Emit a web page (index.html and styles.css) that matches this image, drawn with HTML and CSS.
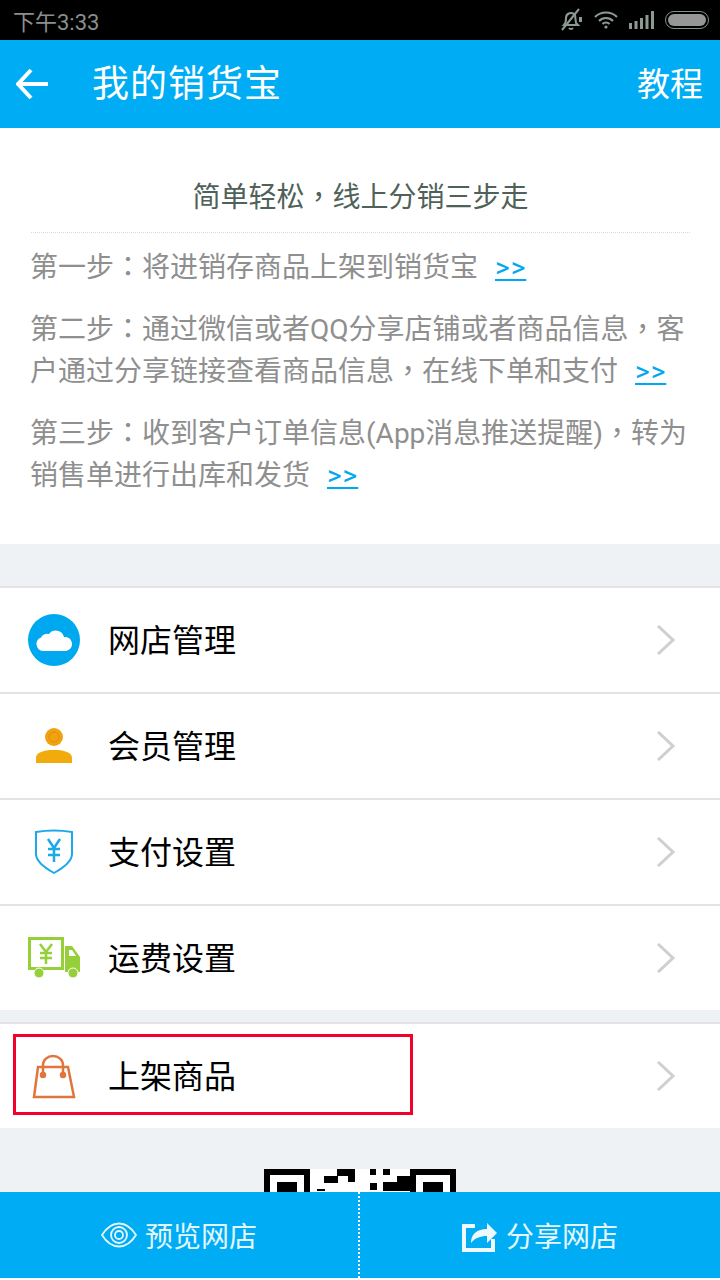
FILE: index.html
```html
<!DOCTYPE html>
<html lang="zh-CN">
<head>
  <meta charset="UTF-8" />
  <meta name="viewport" content="width=device-width, initial-scale=1.0"/>
  <title>我的销货宝</title>
  <link rel="stylesheet" href="styles.css">
</head>
<body>

<div class="app">
  <!-- status bar -->
  <div class="status-bar">
    <span class="status-time">下午3:33</span>
    <div class="status-icons">
      <svg class="icon-bell" width="24" height="24" viewBox="0 0 24 24" fill="none" stroke="#8d9a92" stroke-width="2">
        <path d="M5 17c2-2 2-4 2-7a5 5 0 0 1 9-3l1 8 2 2z"/>
        <path d="M10 20a2.5 2.5 0 0 0 4 0"/>
        <path d="M20 1L3 22"/>
        <path d="M20 9h3v5h-3z" fill="#8d9a92" stroke="none"/>
      </svg>
      <svg class="icon-wifi" width="24" height="18" viewBox="0 0 24 18" fill="none" stroke="#8d9a92" stroke-width="2.2">
        <path d="M1 6c6-6 16-6 22 0"/>
        <path d="M5 10c4-4 10-4 14 0"/>
        <path d="M8.5 13c2-2 5-2 7 0"/>
        <circle cx="12" cy="16" r="1.6" fill="#8d9a92" stroke="none"/>
      </svg>
      <svg class="icon-signal" width="25" height="18" viewBox="0 0 25 18" fill="#8d9a92">
        <rect x="0" y="12" width="3" height="6"/>
        <rect x="5.5" y="10" width="3" height="8"/>
        <rect x="11" y="7" width="3" height="11"/>
        <rect x="16.5" y="4" width="3" height="14"/>
        <rect x="22" y="0" width="3" height="18"/>
      </svg>
      <div class="battery"><div class="battery-fill"></div></div>
    </div>
  </div>

  <!-- title bar -->
  <div class="title-bar">
    <svg class="back-arrow" width="32" height="32" viewBox="0 0 32 32" fill="none" stroke="#fff" stroke-width="4">
      <path d="M15 2L2 16l13 14"/>
      <path d="M2 16h30"/>
    </svg>
    <h1 class="page-title">我的销货宝</h1>
    <span class="title-action">教程</span>
  </div>

  <div class="content">
    <section class="intro">
      <h2 class="intro-title">简单轻松<span class="cn-mark" lang="zh-TW">，</span>线上分销三步走</h2>
      <p class="step">第一步<span class="cn-mark" lang="zh-TW">：</span>将进销存商品上架到销货宝 <a class="more">&gt;&gt;</a></p>
      <p class="step">第二步<span class="cn-mark" lang="zh-TW">：</span>通过微信或者QQ分享店铺或者商品信息<span class="cn-mark" lang="zh-TW">，</span>客户通过分享链接查看商品信息<span class="cn-mark" lang="zh-TW">，</span>在线下单和支付 <a class="more">&gt;&gt;</a></p>
      <p class="step">第三步<span class="cn-mark" lang="zh-TW">：</span>收到客户订单信息(App消息推送提醒)<span class="cn-mark" lang="zh-TW">，</span>转为销售单进行出库和发货 <a class="more">&gt;&gt;</a></p>
    </section>

    <div class="menu-group">
      <div class="menu-row">
        <svg class="menu-icon" width="52" height="52" viewBox="0 0 52 52">
          <circle cx="26" cy="26" r="26" fill="#00a8ef"/>
          <path d="M15 37a7 7 0 0 1-2-13.500a7.500 7.500 0 0 1 8-3.500a8.500 8.500 0 0 1 15 3a7 7 0 0 1 2 14z" fill="#fff"/>
        </svg>
        <span class="menu-label">网店管理</span>
        <svg class="chevron" width="20" height="30" viewBox="0 0 20 30" fill="none" stroke="#cfcfcf" stroke-width="3"><path d="M2 1l15 14L2 29"/></svg>
      </div>
      <div class="menu-row">
        <svg class="menu-icon" width="52" height="52" viewBox="0 0 52 52">
          <circle cx="26" cy="17" r="9" fill="#f0a30f"/>
          <circle cx="26" cy="17" r="5" fill="none" stroke="#e08e0a" stroke-width="1"/>
          <path d="M8 43v-5c0-5 6-7 13-8h10c7 1 13 3 13 8v5z" fill="#f2ab0c"/>
        </svg>
        <span class="menu-label">会员管理</span>
        <svg class="chevron" width="20" height="30" viewBox="0 0 20 30" fill="none" stroke="#cfcfcf" stroke-width="3"><path d="M2 1l15 14L2 29"/></svg>
      </div>
      <div class="menu-row">
        <svg class="menu-icon" width="52" height="52" viewBox="0 0 52 52" fill="none" stroke="#1ba9ea" stroke-width="2">
          <path d="M8 6c12-2 24-2 36 0v22c0 8-9 14-18 19-9-5-18-11-18-19z"/>
          <path d="M20 13l6 9 6-9M26 22v14M20 23h12M20 29h12" stroke-width="2.500"/>
        </svg>
        <span class="menu-label">支付设置</span>
        <svg class="chevron" width="20" height="30" viewBox="0 0 20 30" fill="none" stroke="#cfcfcf" stroke-width="3"><path d="M2 1l15 14L2 29"/></svg>
      </div>
      <div class="menu-row">
        <svg class="menu-icon" width="52" height="52" viewBox="0 0 52 52">
          <path d="M1.500 6.500h33v30H1.500z" fill="none" stroke="#95cf3a" stroke-width="3"/>
          <path d="M12 12l6 8 6-8M18 20v12M12 21h12M12 26h12" fill="none" stroke="#95cf3a" stroke-width="2.500"/>
          <path d="M37 14h7l8 11v15H37z" fill="#95cf3a"/>
          <path d="M41 18h3l4 6h-7z" fill="#fff"/>
          <circle cx="11" cy="41" r="5" fill="#95cf3a" stroke="#fff" stroke-width="1"/>
          <circle cx="45" cy="41" r="5" fill="#95cf3a" stroke="#fff" stroke-width="1"/>
        </svg>
        <span class="menu-label">运费设置</span>
        <svg class="chevron" width="20" height="30" viewBox="0 0 20 30" fill="none" stroke="#cfcfcf" stroke-width="3"><path d="M2 1l15 14L2 29"/></svg>
      </div>
    </div>

    <div class="menu-group">
      <div class="menu-row">
        <svg class="menu-icon" width="52" height="52" viewBox="0 0 52 52" fill="none" stroke="#e0763c" stroke-width="2.500">
          <path d="M10 17h30l6 30H6z"/>
          <path d="M15 25V15a10 9 0 0 1 20 0v10"/>
          <circle cx="15" cy="25" r="2" fill="#e0763c"/>
          <circle cx="35" cy="25" r="2" fill="#e0763c"/>
        </svg>
        <span class="menu-label">上架商品</span>
        <svg class="chevron" width="20" height="30" viewBox="0 0 20 30" fill="none" stroke="#cfcfcf" stroke-width="3"><path d="M2 1l15 14L2 29"/></svg>
        <div class="highlight-box"></div>
      </div>
    </div>

    <!-- shop QR code, runs on under the bottom bar -->
    <div class="qr-wrap">
      <svg class="qr" width="192" height="192" viewBox="0 0 192 192">
        <rect width="192" height="192" fill="#fff"/>
        <path d="M0 0h46v46H0zM6 6v34h34V6z" fill="#000" fill-rule="evenodd"/>
        <path d="M146 0h46v46h-46zM152 6v34h34V6z" fill="#000" fill-rule="evenodd"/>
        <rect x="13" y="13" width="20" height="20"/>
        <rect x="159" y="13" width="20" height="20"/>
        <rect x="73" y="0" width="18" height="7"/>
        <rect x="60" y="7" width="14" height="7"/>
        <rect x="84" y="7" width="7" height="6"/>
        <rect x="106" y="0" width="6" height="6"/>
        <rect x="119" y="0" width="7" height="6"/>
        <rect x="133" y="7" width="13" height="15"/>
        <rect x="119" y="13" width="14" height="9"/>
        <rect x="106" y="14" width="7" height="7"/>
        <rect x="53" y="20" width="8" height="2"/>
      </svg>
    </div>
  </div>

  <!-- bottom actions -->
  <div class="tab-bar">
    <div class="tab tab-preview">
      <svg width="36" height="26" viewBox="0 0 36 26" fill="none" stroke="#e6f6fd" stroke-width="1.800">
        <path d="M1 13C6 5 12 1.500 18 1.500S30 5 35 13c-5 8-11 11.500-17 11.500S6 21 1 13z"/>
        <circle cx="18" cy="13" r="8"/>
        <circle cx="18" cy="13" r="4"/>
      </svg>
      <span>预览网店</span>
    </div>
    <div class="tab">
      <svg width="36" height="40" viewBox="0 0 36 40" fill="none" stroke="#eef9fe" stroke-width="4">
        <path d="M13 11H2v24h29V24"/>
        <path d="M9 28c0-9 6-14 16-14V8l10 10-10 10v-7c-7 0-12 2-16 7z" fill="#eef9fe" stroke="none"/>
      </svg>
      <span>分享网店</span>
    </div>
  </div>
</div>

</body>
</html>
```

FILE: styles.css
```css
:root {
  --blue: #00adf5;
  --page-bg: #eef2f5;
  --line: #e3e3e5;
}
html, body {
  margin: 0;
  padding: 0;
  background: #fff;
}
body {
  font-family: "Roboto", "Noto Sans CJK SC", sans-serif;
}
.app {
  display: flex;
  flex-direction: column;
  height: 1280px;
  overflow: hidden;
}

/* status bar */
.status-bar {
  display: flex;
  justify-content: space-between;
  align-items: center;
  flex: none;
  height: 40px;
  padding: 0 11px 0 13px;
  background: #000;
  color: #8a8f8c;
}
.status-time {
  font-size: 22px;
}
.status-icons {
  display: flex;
  align-items: center;
  gap: 11px;
}
.battery {
  box-sizing: border-box;
  width: 44px;
  height: 18px;
  padding: 2px;
  border: 1px solid #7f9488;
  border-radius: 9px;
}
.battery-fill {
  height: 100%;
  border-radius: 7px;
  background: #969696;
}

/* title bar */
.title-bar {
  display: flex;
  align-items: center;
  flex: none;
  height: 88px;
  padding: 0 17px 0 16px;
  background: var(--blue);
  color: #fff;
}
.back-arrow {
  flex: none;
}
.page-title {
  flex: 1;
  margin: 2px 0 0 44px;
  font-size: 37px;
  font-weight: 400;
  line-height: 48px;
  letter-spacing: 1px;
}
.title-action {
  margin-top: 2px;
  font-size: 33px;
  line-height: 48px;
}

.content {
  flex: 1;
  min-height: 0;
  overflow: hidden;
  background: var(--page-bg);
}

/* intro text */
.intro {
  box-sizing: border-box;
  height: 416px;
  padding: 49px 30px 0;
  background: #fff;
}
.intro-title {
  height: 42px;
  margin: 0 0 14px 1px;
  padding-bottom: 13px;
  border-bottom: 1px dotted #d8dcd9;
  font-size: 28px;
  font-weight: 400;
  line-height: 42px;
  text-align: center;
  color: #4f6259;
}
.step {
  margin: 0 0 20px;
  font-size: 28px;
  line-height: 42px;
  color: #8f8f8f;
}
/* centred full-width punctuation */
.cn-mark {
  font-family: "Noto Sans CJK TC", sans-serif;
  line-height: 1;
}
.more {
  margin-left: 10px;
  line-height: 1;
  letter-spacing: 1px;
  color: #00a8ef;
  text-decoration: underline;
  text-underline-offset: 2px;
}

/* menu rows */
.menu-group {
  margin-top: 12px;
  background: #fff;
}
.intro + .menu-group {
  margin-top: 42px;
}
.menu-row {
  position: relative;
  display: flex;
  align-items: center;
  box-sizing: border-box;
  height: 106px;
  padding: 0 44px 0 28px;
  border-top: 2px solid var(--line);
}
.menu-group:last-of-type .menu-row {
  border-bottom: 2px solid var(--line);
}
.menu-label {
  flex: 1;
  margin: 2px 0 0 28px;
  font-size: 32px;
  line-height: 40px;
  color: #000;
}
.chevron {
  flex: none;
}
.highlight-box {
  position: absolute;
  left: 13px;
  top: 10px;
  width: 400px;
  height: 81px;
  box-sizing: border-box;
  border: 3px solid #f5002a;
}

.qr-wrap {
  display: flex;
  justify-content: center;
  padding-top: 41px;
}
.qr {
  flex: none;
}

/* bottom bar */
.tab-bar {
  display: flex;
  flex: none;
  height: 86px;
  margin-bottom: 2px;
  background: var(--blue);
  color: #e6f6fd;
}
.tab {
  display: flex;
  flex: 0 0 50%;
  box-sizing: border-box;
  align-items: center;
  justify-content: center;
  gap: 8px;
  font-size: 28px;
}
.tab-preview {
  border-right: 2px dotted #fff;
}
```
